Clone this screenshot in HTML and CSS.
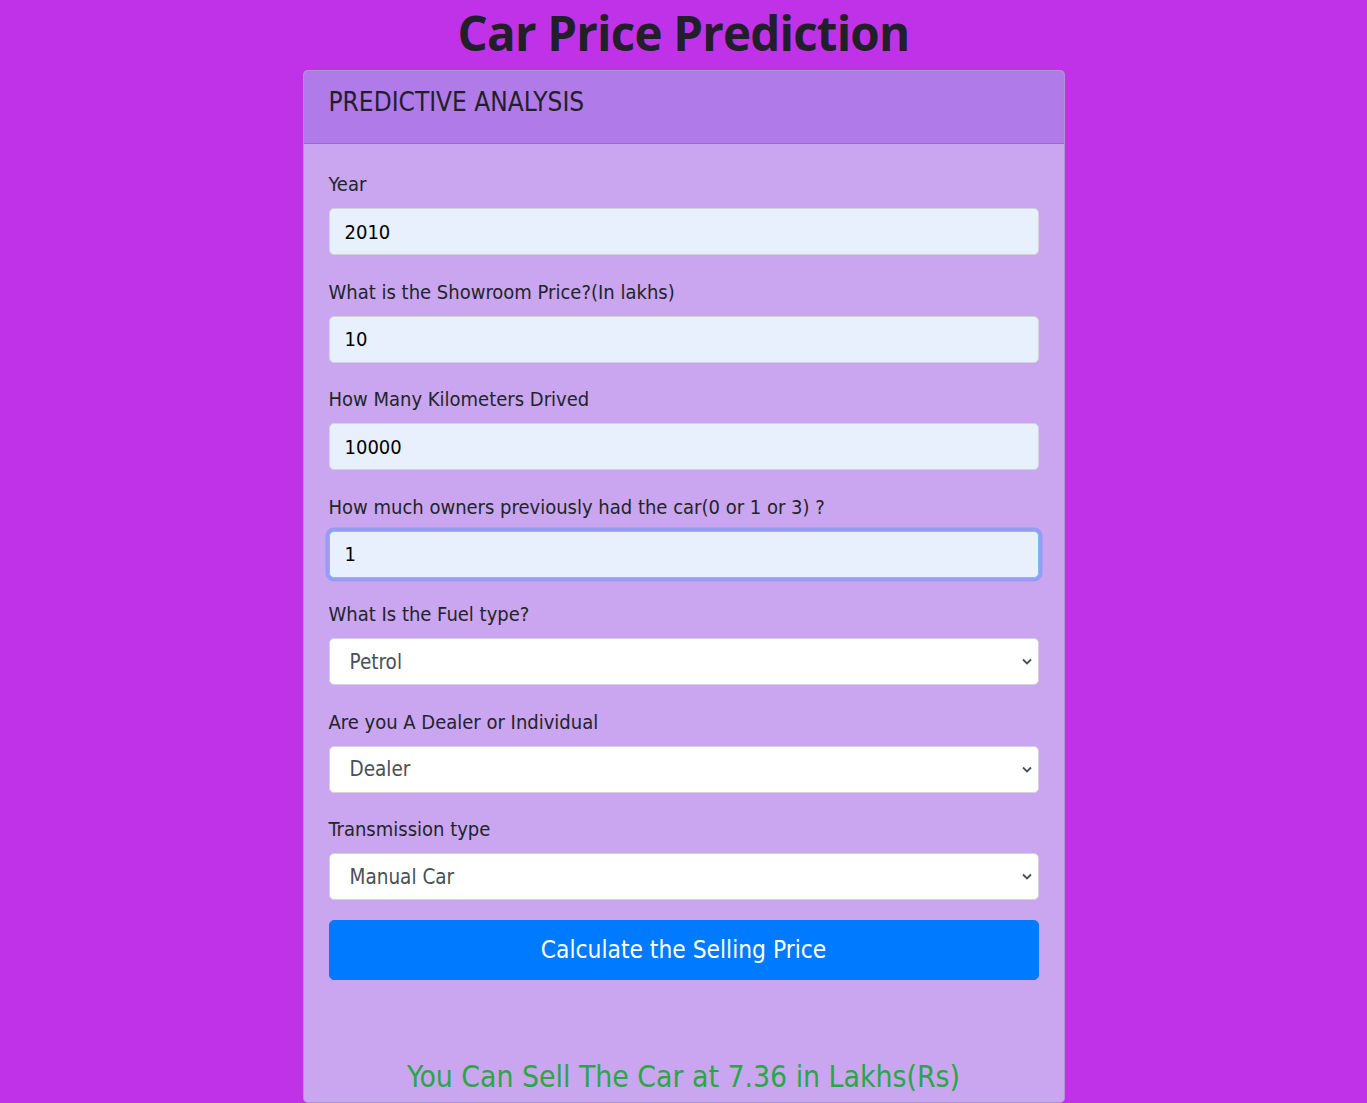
FILE: index.html
```html
<!DOCTYPE html>
<html lang="en">
<head>
<meta charset="utf-8">
<title>Car Price Prediction</title>
<link rel="stylesheet" href="styles.css">
</head>
<body>
<h1 class="title">Car Price Prediction</h1>
<div class="card">
  <div class="card-header">PREDICTIVE ANALYSIS</div>
  <div class="card-body">
    <form class="form">
      <div class="form-group">
        <label class="form-label">Year</label>
        <input class="form-control filled" type="text" value="2010">
      </div>
      <div class="form-group">
        <label class="form-label">What is the Showroom Price?(In lakhs)</label>
        <input class="form-control filled" type="text" value="10">
      </div>
      <div class="form-group">
        <label class="form-label">How Many Kilometers Drived</label>
        <input class="form-control filled" type="text" value="10000">
      </div>
      <div class="form-group">
        <label class="form-label">How much owners previously had the car(0 or 1 or 3) ?</label>
        <input class="form-control filled focused" type="text" value="1">
      </div>
      <div class="form-group">
        <label class="form-label">What Is the Fuel type?</label>
        <div class="select-wrap">
          <select class="form-control select"><option>Petrol</option><option>Diesel</option><option>CNG</option></select>
          <svg class="chevron" width="10" height="7" viewBox="0 0 10 7"><path d="M1 1.5 L5 5.5 L9 1.5" fill="none" stroke="#4a4f55" stroke-width="1.8"/></svg>
        </div>
      </div>
      <div class="form-group">
        <label class="form-label">Are you A Dealer or Individual</label>
        <div class="select-wrap">
          <select class="form-control select"><option>Dealer</option><option>Individual</option></select>
          <svg class="chevron" width="10" height="7" viewBox="0 0 10 7"><path d="M1 1.5 L5 5.5 L9 1.5" fill="none" stroke="#4a4f55" stroke-width="1.8"/></svg>
        </div>
      </div>
      <div class="form-group last">
        <label class="form-label">Transmission type</label>
        <div class="select-wrap">
          <select class="form-control select"><option>Manual Car</option><option>Automatic Car</option></select>
          <svg class="chevron" width="10" height="7" viewBox="0 0 10 7"><path d="M1 1.5 L5 5.5 L9 1.5" fill="none" stroke="#4a4f55" stroke-width="1.8"/></svg>
        </div>
      </div>
      <button class="btn" type="button">Calculate the Selling Price</button>
    </form>
    <h3 class="result">You Can Sell The Car at 7.36 in Lakhs(Rs)</h3>
  </div>
</div>
</body>
</html>
```
FILE: styles.css
```css
html, body {
  margin: 0;
  padding: 0;
}
body {
  background: #c032e8;
  color: #212529;
  font-family: "DejaVu Sans Condensed", "Open Sans", sans-serif;
  font-size: 20px;
  line-height: 1.5;
}
.title {
  margin: 0 0 6px;
  padding-top: 2px;
  text-align: center;
  font-family: "Open Sans", sans-serif;
  font-weight: 700;
  font-size: 47.5px;
  line-height: 62px;
  color: #221f2a;
  letter-spacing: -0.8px;
}
.card {
  width: 760px;
  margin: 0 auto;
  border: 1px solid rgba(0, 0, 0, 0.12);
  border-radius: 5px;
  background: #caa6f0;
  overflow: hidden;
}
.card-header {
  background: #b07ae8;
  border-bottom: 1px solid rgba(0, 0, 0, 0.12);
  padding: 13px 25px 23px;
  font-size: 26px;
  line-height: 36px;
  color: #221f2a;
}
.card-body {
  padding: 27px 25px 7px;
}
.form-group {
  margin-bottom: 23.5px;
}
.form-group.last {
  margin-bottom: 20px;
}
.form-label {
  display: block;
  margin-bottom: 10px;
  line-height: 27px;
  font-size: 20px;
  color: #212529;
}
.form-control {
  box-sizing: border-box;
  display: block;
  width: 100%;
  height: 47px;
  padding: 0 15px;
  font-family: inherit;
  font-size: 20px;
  color: #000;
  background: #fff;
  border: 1px solid #ced4da;
  border-radius: 5px;
  outline: none;
}
.filled {
  background: #e8f0fe;
}
.focused {
  border-color: #80bdff;
  box-shadow: 0 0 0 3.5px rgba(0, 123, 255, 0.25);
}
.select-wrap {
  position: relative;
}
.select {
  appearance: none;
  -webkit-appearance: none;
  padding-left: 20px;
  font-size: 20.5px;
  color: #495057;
}
.chevron {
  position: absolute;
  right: 7px;
  top: 20px;
  pointer-events: none;
}
.btn {
  display: block;
  width: 100%;
  height: 60px;
  border: 1px solid #007bff;
  border-radius: 5px;
  background: #007bff;
  color: #fff;
  font-family: inherit;
  font-size: 24.3px;
  line-height: 36px;
  cursor: pointer;
}
.result {
  margin: 79px 0 0;
  text-align: center;
  font-weight: 400;
  font-size: 29.8px;
  line-height: 36px;
  color: #28a745;
}
```
